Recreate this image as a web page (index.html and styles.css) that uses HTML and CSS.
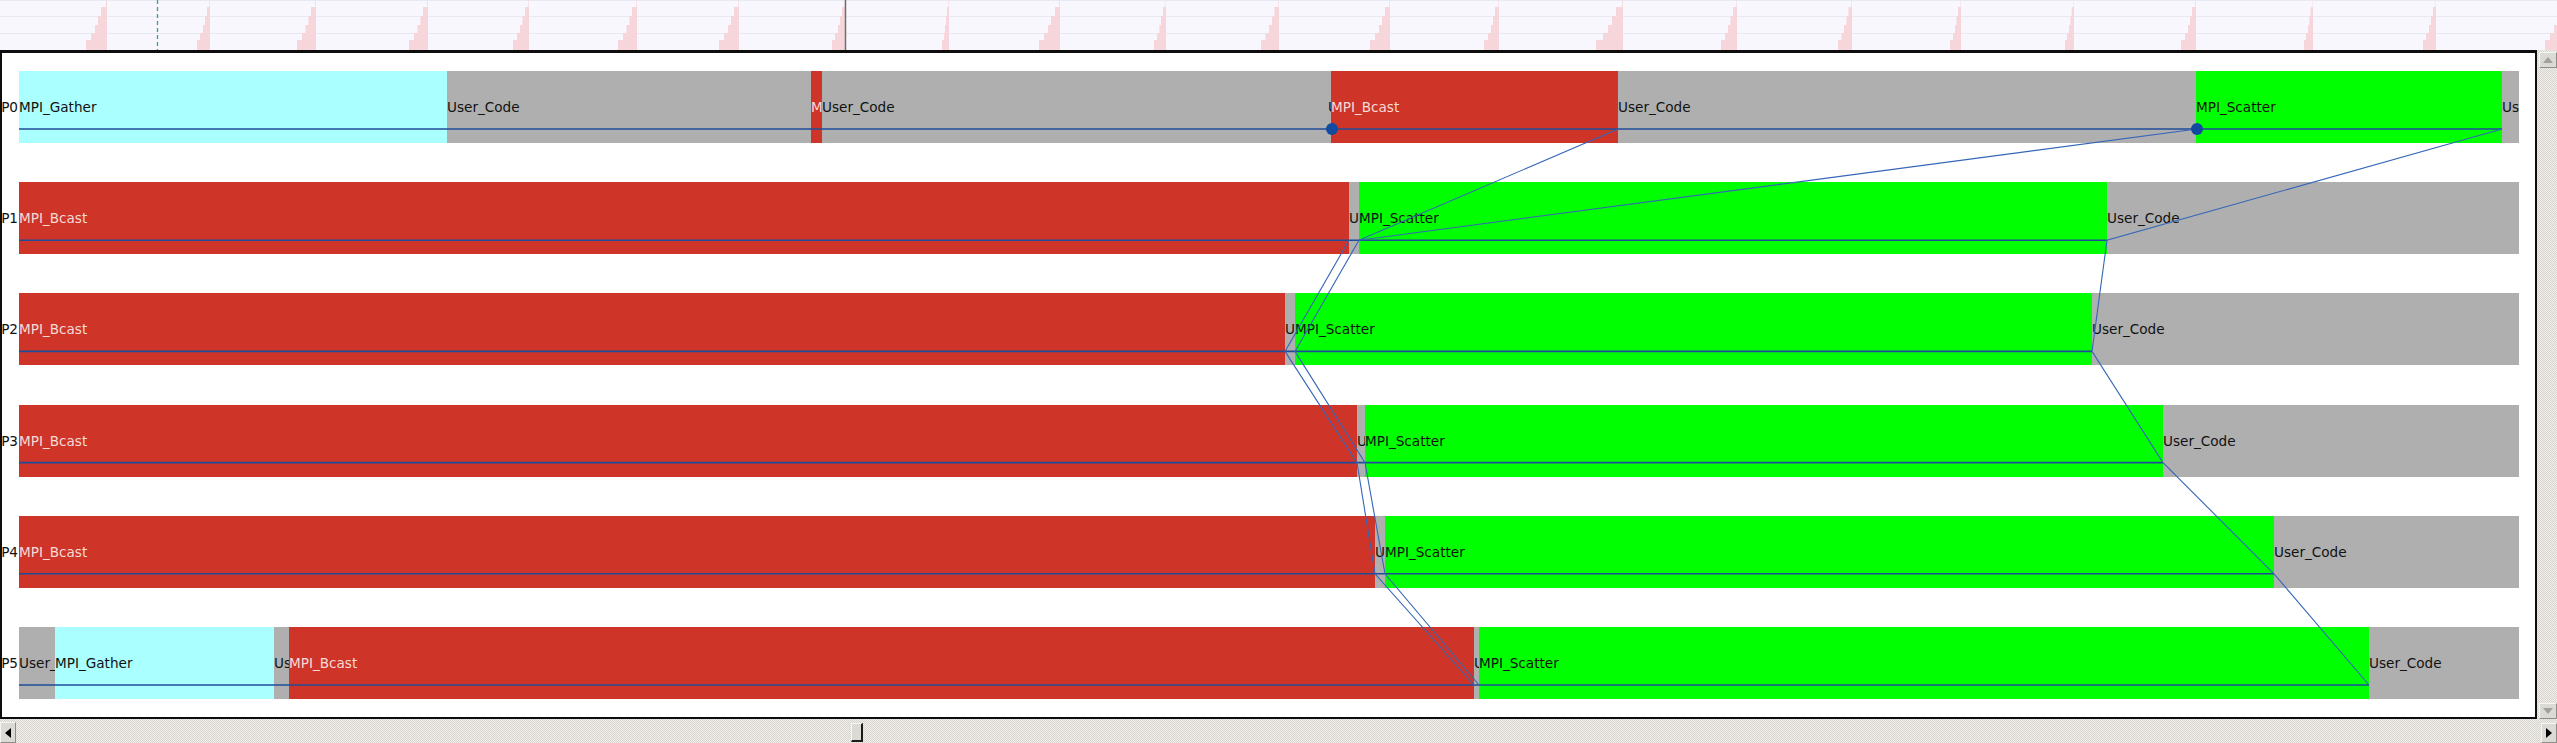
FILE: index.html
```html
<!DOCTYPE html>
<html>
<head>
<meta charset="utf-8">
<title>Timeline</title>
<link rel="stylesheet" href="styles.css">
</head>
<body>
<div class="strip">
  <svg class="strip-svg" width="2557" height="50" viewBox="0 0 2557 50">
    <g class="grid">
      <line x1="0" y1="0.5" x2="2557" y2="0.5"/>
      <line x1="0" y1="16.5" x2="2557" y2="16.5"/>
      <line x1="0" y1="33.5" x2="2557" y2="33.5"/>
    </g>
    <g class="hist">
      <path d="M86 50V40H91V33H95V25H98V16H101V7H106V0H107V50Z"/>
      <path d="M197 50V40H200V33H203V25H205V16H207V7H209.5V0H210V50Z"/>
      <path d="M297 50V40H302V33H305.5V25H308.5V16H311V7H315.4V0H316V50Z"/>
      <path d="M409 50V40H414V33H417.5V25H420.5V16H423V7H427.4V0H428V50Z"/>
      <path d="M513 50V40H517V33H520V25H522.5V16H525V7H528.5V0H529V50Z"/>
      <path d="M618 50V40H623V33H626.5V25H629.5V16H632V7H636.4V0H637V50Z"/>
      <path d="M719 50V40H724V33H728V25H731V16H734V7H738.4V0H739V50Z"/>
      <path d="M832 50V40H835V33H838V25H840V16H842V7H844.5V0H845V50Z"/>
      <path d="M942 50V40H944V33H945V25H946V16H947V7H948.5V0H949V50Z"/>
      <path d="M1039 50V40H1044V33H1048V25H1051V16H1055V7H1059.4V0H1060V50Z"/>
      <path d="M1154 50V40H1157V33H1159.4V25H1161V16H1163V7H1165.6V0H1166V50Z"/>
      <path d="M1261 50V40H1265.5V33H1269V25H1272V16H1274.5V7H1278.5V0H1279V50Z"/>
      <path d="M1370 50V40H1375V33H1379V25H1382V16H1385V7H1389.4V0H1390V50Z"/>
      <path d="M1484 50V40H1488V33H1491V25H1493V16H1495V7H1498.5V0H1499V50Z"/>
      <path d="M1596 50V40H1603V33H1608V25H1612V16H1616V7H1622.2V0H1623V50Z"/>
      <path d="M1721 50V40H1725V33H1728V25H1730.5V16H1733V7H1736.5V0H1737V50Z"/>
      <path d="M1838 50V40H1841.5V33H1844V25H1846.5V16H1848.5V7H1851.5V0H1852V50Z"/>
      <path d="M1950 50V40H1953V33H1955V25H1956.5V16H1958V7H1960.6V0H1961V50Z"/>
      <path d="M2065 50V40H2067V33H2069V25H2070.4V16H2071.7V7H2073.7V0H2074V50Z"/>
      <path d="M2181 50V40H2185V33H2188V25H2190V16H2192V7H2195.5V0H2196V50Z"/>
      <path d="M2304 50V40H2306V33H2308V25H2309.4V16H2310.7V7H2312.7V0H2313V50Z"/>
      <path d="M2423 50V40H2426V33H2429V25H2431V16H2433V7H2435.6V0H2436V50Z"/>
      <path d="M2545 50V40H2550V33H2554V25H2557V50Z"/>
    </g>
    <line class="cursor" x1="157.5" y1="0" x2="157.5" y2="50"/>
    <line class="marker" x1="845.5" y1="0" x2="845.5" y2="50"/>
  </svg>
</div>

<div class="middle">
  <div class="panel">
    <div class="rows">
      <div class="row">
        <div class="pid">P0</div>
        <div class="bar">
          <div class="seg gather" style="width:428px">MPI_Gather</div>
          <div class="seg user" style="width:364px">User_Code</div>
          <div class="seg bcast" style="width:11px">MPI_Bcast</div>
          <div class="seg user" style="width:506px">User_Code</div>
          <div class="seg user" style="width:3px">User_Code</div>
          <div class="seg bcast" style="width:287px">MPI_Bcast</div>
          <div class="seg user" style="width:578px">User_Code</div>
          <div class="seg scatter" style="width:306px">MPI_Scatter</div>
          <div class="seg user" style="width:17px">User_Code</div>
        </div>
      </div>
      <div class="row">
        <div class="pid">P1</div>
        <div class="bar">
          <div class="seg bcast" style="width:1330px">MPI_Bcast</div>
          <div class="seg user" style="width:10px">User_Code</div>
          <div class="seg scatter" style="width:748px">MPI_Scatter</div>
          <div class="seg user" style="width:412px">User_Code</div>
        </div>
      </div>
      <div class="row">
        <div class="pid">P2</div>
        <div class="bar">
          <div class="seg bcast" style="width:1266px">MPI_Bcast</div>
          <div class="seg user" style="width:10px">User_Code</div>
          <div class="seg scatter" style="width:797px">MPI_Scatter</div>
          <div class="seg user" style="width:427px">User_Code</div>
        </div>
      </div>
      <div class="row">
        <div class="pid">P3</div>
        <div class="bar">
          <div class="seg bcast" style="width:1338px">MPI_Bcast</div>
          <div class="seg user" style="width:8px">User_Code</div>
          <div class="seg scatter" style="width:798px">MPI_Scatter</div>
          <div class="seg user" style="width:356px">User_Code</div>
        </div>
      </div>
      <div class="row">
        <div class="pid">P4</div>
        <div class="bar">
          <div class="seg bcast" style="width:1356px">MPI_Bcast</div>
          <div class="seg user" style="width:10px">User_Code</div>
          <div class="seg scatter" style="width:889px">MPI_Scatter</div>
          <div class="seg user" style="width:245px">User_Code</div>
        </div>
      </div>
      <div class="row">
        <div class="pid">P5</div>
        <div class="bar">
          <div class="seg user" style="width:36px">User_Code</div>
          <div class="seg gather" style="width:219px">MPI_Gather</div>
          <div class="seg user" style="width:15px">User_Code</div>
          <div class="seg bcast" style="width:1185px">MPI_Bcast</div>
          <div class="seg user" style="width:5px">User_Code</div>
          <div class="seg scatter" style="width:890px">MPI_Scatter</div>
          <div class="seg user" style="width:150px">User_Code</div>
        </div>
      </div>
    </div>

    <svg class="overlay" width="2537" height="669" viewBox="0 50 2537 669">
      <g class="state-lines">
        <line x1="19" y1="129" x2="2502" y2="129"/>
        <line x1="19" y1="240.2" x2="2107" y2="240.2"/>
        <line x1="19" y1="351.4" x2="2092" y2="351.4"/>
        <line x1="19" y1="462.6" x2="2163" y2="462.6"/>
        <line x1="19" y1="573.8" x2="2274" y2="573.8"/>
        <line x1="19" y1="685" x2="2369" y2="685"/>
      </g>
      <g class="msgs">
        <polyline points="1618,129 1359,240.2"/>
        <polyline points="2197,129 1359,240.2"/>
        <polyline points="2502,129 2107,240.2 2092,351.4 2163,462.6 2274,573.8 2369,685"/>
        <polyline points="1349,240.2 1285,351.4 1357,462.6 1375,573.8 1474,685"/>
        <polyline points="1359,240.2 1295,351.4 1365,462.6 1385,573.8 1479,685"/>
      </g>
      <g class="dots">
        <circle cx="1332" cy="129" r="6"/>
        <circle cx="2197" cy="129" r="6"/>
      </g>
    </svg>
  </div>

  <div class="vscroll">
    <div class="sbtn vbtn">
      <svg width="10" height="6" viewBox="0 0 10 6"><polygon class="tri-dis" points="5,0 10,6 0,6"/></svg>
    </div>
    <div class="vtrack"></div>
    <div class="sbtn vbtn">
      <svg width="10" height="6" viewBox="0 0 10 6"><polygon class="tri-dis" points="0,0 10,0 5,6"/></svg>
    </div>
  </div>
</div>

<div class="hscroll">
  <div class="sbtn hbtn left">
    <svg width="6" height="10" viewBox="0 0 6 10"><polygon class="tri" points="6,0 6,10 0,5"/></svg>
  </div>
  <div class="htrack">
    <div class="thumb" style="margin-left:835px"></div>
  </div>
  <div class="sbtn hbtn right">
    <svg width="6" height="10" viewBox="0 0 6 10"><polygon class="tri" points="0,0 6,5 0,10"/></svg>
  </div>
</div>
</body>
</html>
```

FILE: styles.css
```css
* {
  box-sizing: border-box;
}

html,
body {
  margin: 0;
  padding: 0;
}

body {
  width: 2557px;
  height: 743px;
  overflow: hidden;
  background: #ffffff;
  font-family: "DejaVu Sans", "Liberation Sans", sans-serif;
  font-size: 13.6px;
  color: #111111;
}

/* ---------- top histogram strip ---------- */
.strip {
  height: 50px;
  background: #f7f7fd;
}

.strip-svg {
  display: block;
}

.grid line {
  stroke: #e9e9f3;
  stroke-width: 1;
}

.hist path {
  fill: #f6d6da;
}

.cursor {
  stroke: #3a9f9b;
  stroke-width: 1.3;
  stroke-dasharray: 4 3;
}

.marker {
  stroke: #6e6e6e;
  stroke-width: 1.5;
}

/* ---------- main timeline panel ---------- */
.middle {
  display: flex;
  height: 669px;
}

.panel {
  position: relative;
  flex: none;
  width: 2537px;
  height: 669px;
  border: 2px solid #0d0d0d;
  border-top-width: 3px;
  padding-top: 18px;
  background: #ffffff;
}

.rows {
  display: flex;
  flex-direction: column;
  gap: 39.2px;
}

.row {
  display: flex;
  align-items: center;
  height: 72px;
}

.pid {
  flex: none;
  width: 17px;
  display: flex;
  justify-content: flex-end;
  white-space: nowrap;
  padding-right: 1px;
  color: #111111;
}

.bar {
  display: flex;
  flex: none;
  width: 2500px;
  height: 72px;
}

.seg {
  flex: none;
  height: 72px;
  display: flex;
  align-items: center;
  overflow: hidden;
  white-space: nowrap;
}

.user {
  background: #afafaf;
}

.gather {
  background: #aaffff;
}

.bcast {
  background: #ce3427;
  color: #f4dbd8;
}

.scatter {
  background: #00ff00;
}

.overlay {
  position: absolute;
  left: -2px;
  top: -3px;
  pointer-events: none;
}

.state-lines line {
  stroke: #1f4c9a;
  stroke-width: 1.6;
}

.msgs polyline {
  fill: none;
  stroke: #3566b8;
  stroke-width: 1.1;
}

.dots circle {
  fill: #114a9e;
}

/* ---------- scrollbars ---------- */
.vscroll {
  flex: none;
  width: 20px;
  height: 670px;
  display: flex;
  flex-direction: column;
  padding: 2px 0 1px 2px;
  background: repeating-conic-gradient(#d8d5cf 0 25%, #efeeea 0 50%) 0 0 / 2px 2px;
}

.vtrack {
  flex: 1;
}

.sbtn {
  flex: none;
  display: flex;
  align-items: center;
  justify-content: center;
  background: #dcdad5;
  border: 1px solid;
  border-color: #f6f5f3 #8f8d88 #8f8d88 #f6f5f3;
}

.vbtn {
  width: 18px;
  height: 16px;
}

.tri-dis {
  fill: #a3a19c;
}

.tri {
  fill: #000000;
}

.hscroll {
  display: flex;
  align-items: flex-end;
  height: 24px;
  padding-bottom: 0;
  background: repeating-conic-gradient(#d8d5cf 0 25%, #efeeea 0 50%) 0 0 / 2px 2px;
}

.hbtn {
  width: 16px;
  height: 21px;
}

.hbtn.right {
  height: 20px;
  margin-right: 0;
}

.htrack {
  flex: 1;
  height: 21px;
  display: flex;
  align-items: flex-start;
  padding-top: 1px;
}

.thumb {
  width: 12px;
  height: 19px;
  background: #dcdad5;
  border: 1px solid;
  border-color: #f6f5f3 #1a1a1a #1a1a1a #f6f5f3;
  border-right-width: 2px;
  border-bottom-width: 2px;
}
```
